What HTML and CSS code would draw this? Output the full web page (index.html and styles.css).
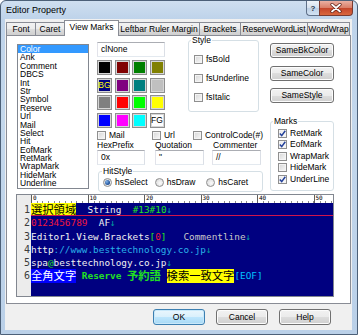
FILE: index.html
```html
<!DOCTYPE html>
<html>
<head>
<meta charset="utf-8">
<link rel="stylesheet" href="styles.css">
</head>
<body>
<div class="window">
  <div class="titlebar">
    <span class="title">Editor Property</span>
    <div class="caps">
      <div class="cap help">?</div>
      <div class="cap close">
        <svg width="12" height="10" viewBox="0 0 12 10"><path d="M2 1.5 L10 8.5 M10 1.5 L2 8.5" stroke="#5a1a10" stroke-width="3.2" stroke-linecap="round"/><path d="M2 1.5 L10 8.5 M10 1.5 L2 8.5" stroke="#ffffff" stroke-width="1.8" stroke-linecap="round"/></svg>
      </div>
    </div>
  </div>
  <div class="client">
    <div class="tabs">
      <div class="tab t1">Font</div>
      <div class="tab t2">Caret</div>
      <div class="tab t3 active">View Marks</div>
      <div class="tab t4">Leftbar Ruler Margin</div>
      <div class="tab t5">Brackets</div>
      <div class="tab t6">ReserveWordList</div>
      <div class="tab t7">WordWrap</div>
    </div>
    <div class="panel">
      <div class="top">
        <div class="list">
          <div class="item selected">Color</div>
          <div class="item">Ank</div>
          <div class="item">Comment</div>
          <div class="item">DBCS</div>
          <div class="item">Int</div>
          <div class="item">Str</div>
          <div class="item">Symbol</div>
          <div class="item">Reserve</div>
          <div class="item">Url</div>
          <div class="item">Mail</div>
          <div class="item">Select</div>
          <div class="item">Hit</div>
          <div class="item">EofMark</div>
          <div class="item">RetMark</div>
          <div class="item">WrapMark</div>
          <div class="item">HideMark</div>
          <div class="item">Underline</div>
        </div>
        <div class="mid">
          <div class="mid-top">
            <div class="colors">
              <div class="edit clnone">clNone</div>
              <div class="grid">
                <div class="sw c-black"></div>
                <div class="sw c-maroon"></div>
                <div class="sw c-green"></div>
                <div class="sw c-olive"></div>
                <div class="sw c-navy bg">BG</div>
                <div class="sw c-purple"></div>
                <div class="sw c-teal"></div>
                <div class="sw c-silver"></div>
                <div class="sw c-gray"></div>
                <div class="sw c-red"></div>
                <div class="sw c-lime"></div>
                <div class="sw c-yellow"></div>
                <div class="sw c-blue"></div>
                <div class="sw c-fuchsia"></div>
                <div class="sw c-aqua"></div>
                <div class="sw c-white fg">FG</div>
              </div>
            </div>
            <fieldset class="group style">
              <legend>Style</legend>
              <div class="chk"><span class="box"></span>fsBold</div>
              <div class="chk"><span class="box"></span>fsUnderline</div>
              <div class="chk"><span class="box"></span>fsItalic</div>
            </fieldset>
          </div>
          <div class="chkrow">
            <div class="chk w-mail"><span class="box"></span>Mail</div>
            <div class="chk w-url"><span class="box"></span>Url</div>
            <div class="chk"><span class="box"></span>ControlCode(#)</div>
          </div>
          <div class="fields">
            <div class="field f1"><div class="lbl">HexPrefix</div><div class="edit">0x</div></div>
            <div class="field f2"><div class="lbl">Quotation</div><div class="edit">"</div></div>
            <div class="field f3"><div class="lbl">Commenter</div><div class="edit">//</div></div>
          </div>
          <fieldset class="group hit">
            <legend>HitStyle</legend>
            <div class="radios">
              <div class="rad-item"><span class="rad on"><span class="dot"></span></span>hsSelect</div>
              <div class="rad-item"><span class="rad"></span>hsDraw</div>
              <div class="rad-item"><span class="rad"></span>hsCaret</div>
            </div>
          </fieldset>
        </div>
        <div class="right">
          <div class="btn small">SameBkColor</div>
          <div class="btn small">SameColor</div>
          <div class="btn small">SameStyle</div>
          <fieldset class="group marks">
            <legend>Marks</legend>
            <div class="chk"><span class="box checked"><svg width="7" height="7" viewBox="0 0 7 7"><path d="M0.8 3.6 L2.7 5.6 L6.3 0.8" fill="none" stroke="#23419a" stroke-width="1.5"/></svg></span>RetMark</div>
            <div class="chk"><span class="box checked"><svg width="7" height="7" viewBox="0 0 7 7"><path d="M0.8 3.6 L2.7 5.6 L6.3 0.8" fill="none" stroke="#23419a" stroke-width="1.5"/></svg></span>EofMark</div>
            <div class="chk"><span class="box"></span>WrapMark</div>
            <div class="chk"><span class="box"></span>HideMark</div>
            <div class="chk"><span class="box checked"><svg width="7" height="7" viewBox="0 0 7 7"><path d="M0.8 3.6 L2.7 5.6 L6.3 0.8" fill="none" stroke="#23419a" stroke-width="1.5"/></svg></span>UnderLine</div>
          </fieldset>
        </div>
      </div>
      <div class="editor">
        <div class="gutter">
          <div class="g-ruler"></div>
          <div class="num">1</div>
          <div class="num">2</div>
          <div class="num">3</div>
          <div class="num">4</div>
          <div class="num">5</div>
          <div class="num">6</div>
        </div>
        <div class="text">
          <div class="ruler">
            <div class="seg">0</div>
            <div class="seg">10</div>
            <div class="seg">20</div>
            <div class="seg">30</div>
            <div class="seg">40</div>
            <div class="seg">50</div>
          </div>
          <div class="line caret"><span class="j hl-y">選択領域</span><span class="w">  String  </span><span class="g">#13#10</span><span class="cr">↓</span></div>
          <div class="line"><span class="r">0123456789</span><span class="w">  AF</span><span class="cr">↓</span></div>
          <div class="line"><span class="w">Editor1.View.Brackets</span><span class="g">[</span><span class="r">0</span><span class="g">]</span><span class="w">   </span><span class="cm">Commentline</span><span class="cr">↓</span></div>
          <div class="line"><span class="w">http</span><span class="u">://www.besttechnology.co.jp</span><span class="cr">↓</span></div>
          <div class="line"><span class="w">spa</span><span class="g">@</span><span class="w">besttechnology.co.jp</span><span class="cr">↓</span></div>
          <div class="line"><span class="j hl-b">全角文字</span><span class="w"> </span><span class="g b">Reserve </span><span class="j g b">予約語</span><span class="w"> </span><span class="j hl-y">検索一致文字</span><span class="eof">[EOF]</span></div>
        </div>
      </div>
    </div>
    <div class="buttons">
      <div class="btn big default">OK</div>
      <div class="btn big">Cancel</div>
      <div class="btn big">Help</div>
    </div>
  </div>
</div>
</body>
</html>
```
FILE: styles.css
```css
* { box-sizing: border-box; }
html, body { margin: 0; padding: 0; }
body {
  width: 358px;
  height: 335px;
  overflow: hidden;
  background: #ffffff;
  font-family: "Liberation Sans", Arial, sans-serif;
  font-size: 8.5px;
  color: #000;
}
.window {
  width: 358px;
  height: 335px;
  display: flex;
  flex-direction: column;
  border: 1px solid #4c6078;
  border-radius: 6px 6px 0 0;
  background: linear-gradient(#cfdff0, #bed3ea 18px, #c3d7ec 120px, #bad0e8);
}
.titlebar {
  height: 18px;
  display: flex;
  align-items: flex-start;
  flex: none;
}
.title {
  font-size: 9px;
  line-height: 9px;
  margin: 5px 0 0 5px;
  color: #000;
}
.caps {
  margin-left: auto;
  margin-right: 4px;
  display: flex;
}
.cap {
  height: 15px;
  border: 1px solid #5f7089;
  border-top: none;
  display: flex;
  align-items: center;
  justify-content: center;
}
.help {
  width: 13px;
  border-right: none;
  border-radius: 0 0 0 4px;
  background: linear-gradient(#eef3f9, #d4e0ee 50%, #bccfe4 50%, #d2e2f3);
  font-weight: bold;
  font-size: 8px;
  color: #27374e;
}
.close {
  width: 34px;
  border-radius: 0 0 4px 0;
  background: linear-gradient(#eab0a2, #d97c66 50%, #c4442a 50%, #d9683f);
  border-color: #7a3b31;
}
.client {
  flex: 1;
  margin: 0 5px 4px 4px;
  background: #f0f0f0;
  padding: 1px 0 0 1px;
  display: flex;
  flex-direction: column;
}
.tabs {
  height: 15px;
  display: flex;
  align-items: flex-end;
}
.tab {
  height: 13px;
  line-height: 12px;
  text-align: center;
  border: 1px solid #898c95;
  border-bottom: none;
  margin-left: -1px;
  background: linear-gradient(#f2f2f2, #ebebeb 50%, #dddddd 50%, #cfcfcf);
  white-space: nowrap;
  overflow: hidden;
}
.tab.t1 { margin-left: 0; width: 30px; }
.tab.t2 { width: 30px; }
.tab.t3 { width: 55px; }
.tab.t4 { width: 82px; }
.tab.t5 { width: 42px; }
.tab.t6 { width: 68px; letter-spacing: -0.15px; }
.tab.t7 { width: 43px; }
.tab.active {
  height: 16px;
  margin-bottom: -1px;
  background: #ffffff;
  position: relative;
  z-index: 1;
  line-height: 13px;
}
.panel {
  width: 345px;
  height: 269px;
  border: 1px solid #898c95;
  background: #ffffff;
  display: flex;
  flex-direction: column;
}
.top {
  height: 158px;
  display: flex;
  align-items: flex-start;
  padding-left: 10px;
  flex: none;
}
.list {
  margin-top: 8px;
  width: 72px;
  height: 145px;
  border: 1px solid #828790;
  background: #fff;
  overflow: hidden;
}
.item {
  height: 8.4px;
  line-height: 8.4px;
  padding-left: 2px;
  white-space: nowrap;
}
.item.selected {
  background: #3399ff;
  color: #fff;
}
.mid {
  margin-left: 8px;
  width: 166px;
  display: flex;
  flex-direction: column;
}
.mid-top {
  display: flex;
  align-items: flex-start;
}
.colors {
  width: 68px;
  margin-top: 6px;
}
.edit {
  height: 15px;
  border: 1px solid;
  border-color: #abadb3 #dbdfe6 #e3e9ef #e2e3ea;
  background: #fff;
  padding-left: 3px;
  line-height: 13px;
  white-space: nowrap;
}
.grid {
  margin-top: 3px;
  display: grid;
  grid-template-columns: repeat(4, 15px);
  grid-auto-rows: 15px;
  gap: 2.5px;
}
.sw {
  border: 1px solid #8e8e8e;
  box-shadow: inset 0 0 0 1px #d6d6d6;
  font-size: 8.5px;
  line-height: 13px;
  text-align: center;
}
.c-black { background: #000000; }
.c-maroon { background: #800000; }
.c-green { background: #008000; }
.c-olive { background: #808000; }
.c-navy { background: #000080; }
.c-purple { background: #800080; }
.c-teal { background: #008080; }
.c-silver { background: #c0c0c0; }
.c-gray { background: #808080; }
.c-red { background: #ff0000; }
.c-lime { background: #00ff00; }
.c-yellow { background: #ffff00; }
.c-blue { background: #0000ff; }
.c-fuchsia { background: #ff00ff; }
.c-aqua { background: #00ffff; }
.c-white { background: #ffffff; }
.sw.bg { color: #ffff00; }
.sw.fg { color: #000; }
.group {
  margin: 0;
  min-width: 0;
  border: 1px solid #d5dfe5;
  border-radius: 3px;
}
.group legend {
  line-height: 9px;
  padding: 0 1px;
  color: #000;
}
.style {
  margin-left: 23px;
  width: 71px;
  height: 76px;
  padding: 9.5px 4px 0 5px;
  display: flex;
  flex-direction: column;
  gap: 10px;
}
.style legend { margin-left: -3px; }
.chk {
  display: flex;
  align-items: center;
  height: 9px;
  line-height: 9px;
  white-space: nowrap;
}
.box {
  flex: none;
  width: 9px;
  height: 9px;
  border: 1px solid #8f8f8f;
  background: linear-gradient(135deg, #d6d6d6, #f9f9f9);
  box-shadow: inset 0 0 0 1px #f4f4f4;
  margin-right: 3px;
  display: flex;
  align-items: center;
  justify-content: center;
}
.box.checked { background: linear-gradient(135deg, #e8e8e8, #fcfcfc); }
.chkrow {
  margin-top: 3.5px;
  display: flex;
}
.w-mail { width: 55px; }
.w-url { width: 41px; }
.fields {
  margin-top: 1px;
  display: flex;
}
.field .lbl {
  height: 9px;
  line-height: 9px;
  white-space: nowrap;
}
.f1 { width: 48px; }
.f2 { width: 49px; margin-left: 10px; }
.f3 { width: 49px; margin-left: 8px; }
.f3 .lbl { padding-left: 1px; }
.hit {
  margin: 1.5px 0 0 1px;
  width: 165px;
  height: 25px;
  padding: 2px 4px 0 4px;
}
.hit legend { margin-left: -1px; }
.radios { display: flex; }
.rad-item {
  width: 52px;
  height: 9px;
  line-height: 9px;
  display: flex;
  align-items: center;
  white-space: nowrap;
}
.rad {
  flex: none;
  width: 9px;
  height: 9px;
  border-radius: 50%;
  border: 1px solid #8f8f8f;
  background: radial-gradient(circle at 60% 60%, #fbfbfb, #d4d4d4);
  margin-right: 3px;
  display: flex;
  align-items: center;
  justify-content: center;
}
.rad .dot {
  width: 5px;
  height: 5px;
  border-radius: 50%;
  background: radial-gradient(circle at 35% 35%, #7fb0e6, #1b4c95 70%);
}
.right {
  margin-left: 7px;
  width: 64px;
  display: flex;
  flex-direction: column;
  padding-top: 7px;
  gap: 7.5px;
}
.btn {
  border: 1px solid #707070;
  border-radius: 3px;
  background: linear-gradient(#f2f2f2, #ebebeb 50%, #dddddd 50%, #cfcfcf);
  box-shadow: inset 0 0 0 1px #fcfcfc;
  text-align: center;
  white-space: nowrap;
}
.btn.small {
  width: 64px;
  height: 15px;
  line-height: 13px;
}
.marks {
  margin-top: 6px;
  width: 64px;
  height: 74.5px;
  padding: 3px 2px 0 7px;
  display: flex;
  flex-direction: column;
  gap: 2.5px;
}
.marks legend { margin-left: -5px; }
.editor {
  margin-left: 9px;
  width: 318px;
  height: 103px;
  border: 1px solid #828790;
  display: flex;
  overflow: hidden;
  flex: none;
}
.gutter {
  width: 14px;
  flex: none;
  background: #ececec;
  font-family: "DejaVu Sans Mono", "Liberation Mono", monospace;
  font-size: 10px;
  color: #3c3c3c;
}
.g-ruler { height: 8px; }
.num {
  height: 13.3px;
  line-height: 13.3px;
  text-align: right;
  padding-right: 1px;
}
.text {
  flex: 1;
  background: #000080;
  overflow: hidden;
  font-family: "DejaVu Sans Mono", "Liberation Mono", monospace;
  font-size: 9.4px;
}
.ruler {
  height: 8px;
  background: #ffffff;
  display: flex;
  overflow: hidden;
}
.seg {
  flex: 0 0 56.5px;
  font-size: 6px;
  line-height: 6px;
  padding-left: 1px;
  color: #000;
  border-left: 1px solid #606060;
  background-image: repeating-linear-gradient(to right, transparent 0 4.65px, #8a8a8a 4.65px 5.65px);
  background-size: 100% 2px;
  background-position: 0 100%;
  background-repeat: no-repeat;
}
.line {
  height: 13.3px;
  line-height: 13.3px;
  white-space: pre;
  overflow: hidden;
  color: #f0f0f0;
}
.line span {
  display: inline-block;
  vertical-align: top;
  height: 13.3px;
  line-height: 13.3px;
}
.line.caret { box-shadow: inset 0 -1px 0 #d0144c; }
.j {
  font-family: "Noto Sans CJK JP", sans-serif;
  font-size: 11.3px;
}
.hl-y { background: #ffff00; color: #000; }
.hl-b { background: #0000ff; color: #fff; }
.w { color: #f0f0f0; }
.g { color: #22e022; }
.b { font-weight: bold; }
.r { color: #f0183c; }
.cr { color: #00a0a0; }
.cm { color: #c8c8c8; }
.u { color: #2ab0e8; }
.eof { color: #00c0ff; }
.line.caret .hl-y { height: 12.3px; }
.buttons {
  margin-top: 5px;
  display: flex;
  justify-content: flex-end;
  gap: 11px;
  padding-right: 21px;
}
.btn.big {
  width: 52px;
  height: 16px;
  line-height: 14px;
}
.btn.default {
  border-color: #3c7fb1;
  background: linear-gradient(#eaf6fd, #d9f0fc 50%, #bee6fd 50%, #a7d9f5);
  box-shadow: inset 0 0 0 1px #c8e8fa;
}
```
